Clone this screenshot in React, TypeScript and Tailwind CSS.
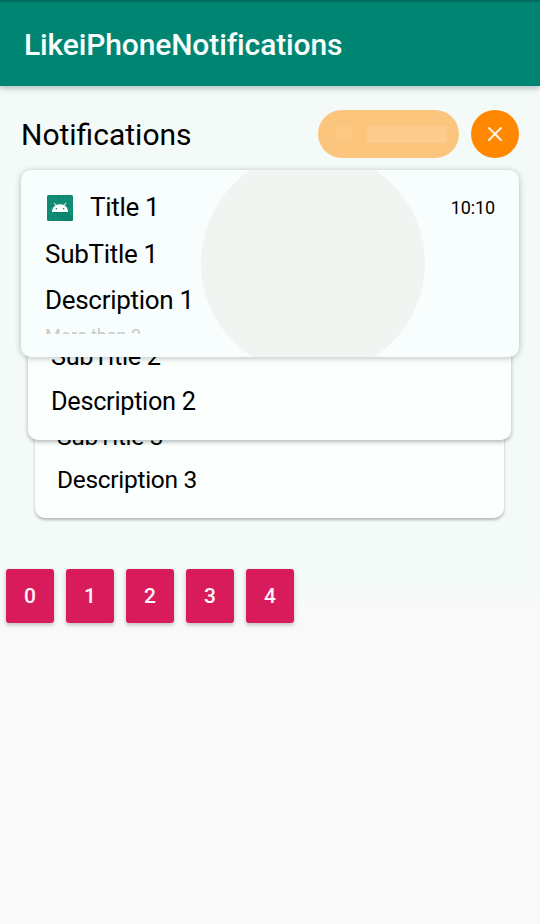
import React from 'react';
import { X } from 'lucide-react';

function AndroidIcon() {
  return (
    <svg viewBox="0 0 26 26" className="block h-[26px] w-[26px] shrink-0">
      <rect width="26" height="26" rx="1.5" fill="#0b8a72" />
      <path d="M4 0v26M9 0v26M14 0v26M19 0v26M24 0v26M0 4h26M0 9h26M0 14h26M0 19h26M0 23h26" stroke="#4bac97" strokeWidth=".35" opacity=".6" />
      <path d="M6 16l14 0 6 6v4H15z" fill="#057460" opacity=".3" />
      <path d="M7 7.800l2 2.500M19 7.800l-2 2.500" stroke="#fff" strokeWidth="1" />
      <path d="M5 17c0-4.500 3-7.800 8-7.800s8 3.300 8 7.800z" fill="#fff" />
      <circle cx="9.400" cy="13.800" r=".8" fill="#0b8a72" />
      <circle cx="16.600" cy="13.800" r=".8" fill="#0b8a72" />
    </svg>
  );
}

function StackedCard({ n, className }: { n: number; className: string }) {
  return (
    <section className={`flex flex-col justify-end overflow-hidden bg-[#fbfffe] ${className}`}>
      <p className="shrink-0">SubTitle {n}</p>
      <p className="shrink-0">Description {n}</p>
    </section>
  );
}

export default function App() {
  return (
    <div className="flex h-[924px] w-[540px] flex-col overflow-hidden bg-[linear-gradient(#f4faf8_0px,#f4faf8_590px,#f9f9f9_610px)] font-['Roboto',sans-serif] text-black">
      <header className="z-10 flex h-[86px] shrink-0 items-center border-t-2 border-[#006c5c] bg-[#008573] pt-[2px] pl-6 shadow-[0_2px_6px_rgba(0,40,50,0.3)]">
        <h1 className="text-[30px] leading-9 font-medium tracking-[-0.13px] whitespace-nowrap text-[#f8fffd]">LikeiPhoneNotifications</h1>
      </header>

      <main className="flex flex-col">
        <div className="mt-6 flex h-12 items-center pr-[21px] pl-[21px]">
          <h2 className="mt-[2px] flex-1 text-[30px] leading-9">Notifications</h2>
          <div className="mr-3 flex h-12 w-[141px] items-center rounded-full bg-[#fbc57e] pl-[17px]">
            <span className="h-4 w-[17px] bg-[#fcc884]" />
            <span className="ml-[15px] h-[17px] w-20 bg-[#fdcb8c]" />
          </div>
          <button className="flex size-12 items-center justify-center rounded-full bg-[#ff8800]">
            <X size={24} strokeWidth={2} color="#fff5e8" />
          </button>
        </div>

        <div className="mt-3 flex flex-col items-center">
          <section className="relative z-30 h-[187px] w-[498px] overflow-hidden rounded-[10px] bg-[#f8fefd] px-6 shadow-[0_1px_6px_rgba(0,20,20,0.28)]">
            <div className="absolute -top-[19px] left-[180px] size-[224px] rounded-full bg-[#f0f5f2]" />
            <div className="relative flex h-[46px] items-center pt-[28px]">
              <div className="mt-px ml-[2px]"><AndroidIcon /></div>
              <h3 className="ml-[17px] flex-1 text-[26px] leading-8 tracking-[-0.3px]">Title 1</h3>
              <time className="text-[18px] tracking-[-0.1px]">10:10</time>
            </div>
            <p className="relative mt-[22px] text-[26px] leading-8 tracking-[-0.3px]">SubTitle 1</p>
            <p className="relative mt-[14px] text-[26px] leading-8 tracking-[-0.3px]">Description 1</p>
            <div className="relative mt-[9px] h-[9px] overflow-hidden">
              <p className="text-[18px] leading-[22px] text-[#c5cbc9]">More than 2</p>
            </div>
          </section>
          <StackedCard n={2} className="z-20 -mt-3 mr-px h-[95px] w-[483px] gap-[14px] rounded-[10px] pb-[23px] pl-[23px] text-[25.3px] leading-[31px] tracking-[-0.3px] shadow-[0_2px_4px_rgba(0,20,20,0.3)]" />
          <StackedCard n={3} className="z-10 -mt-3 mr-px h-[90px] w-[469px] gap-[13px] rounded-[10px] pb-[23px] pl-[22px] text-[24.500px] leading-[30px] tracking-[-0.3px] shadow-[0_2px_3px_rgba(0,20,20,0.28)]" />
        </div>

        <div className="mt-[51px] flex gap-3 pl-[6px]">
          {[0, 1, 2, 3, 4].map((n) => (
            <button key={n} className="h-[54px] w-12 rounded-[3px] bg-[#d81b5b] pt-[2px] text-[21px] font-medium text-[#fff5fa] shadow-[0_2px_4px_rgba(0,20,20,0.25)]">
              {n}
            </button>
          ))}
        </div>
      </main>
    </div>
  );
}
